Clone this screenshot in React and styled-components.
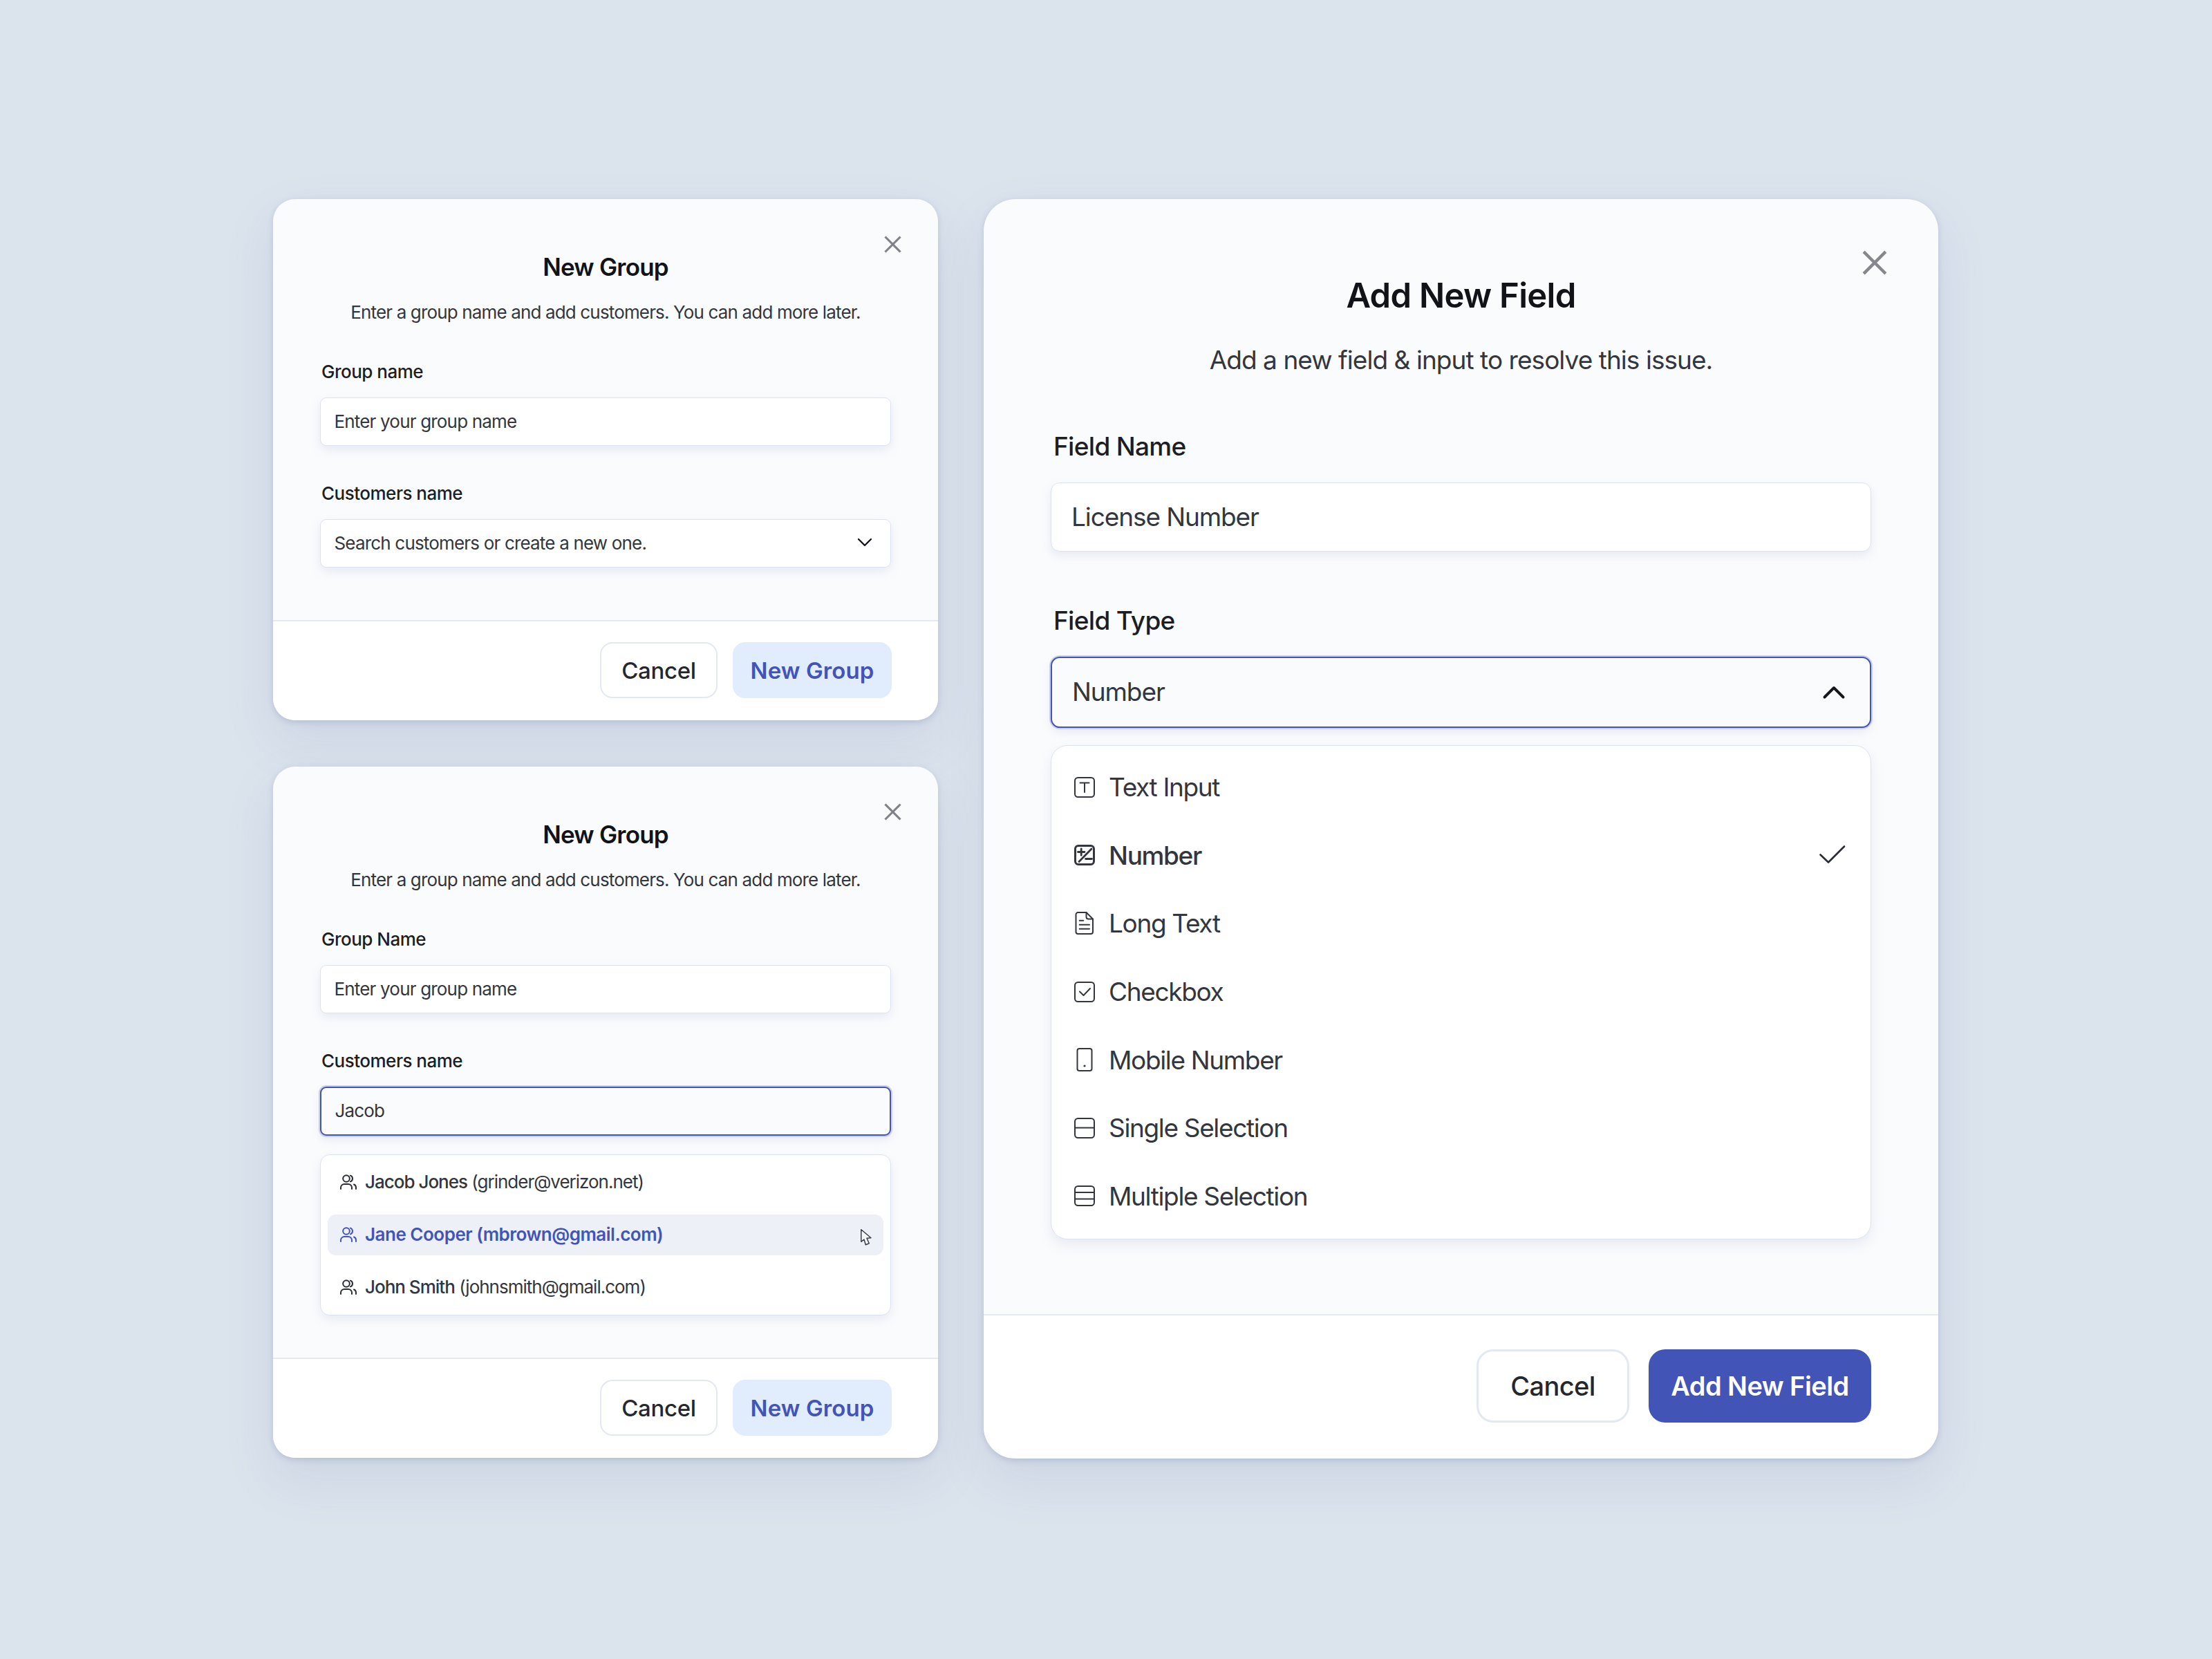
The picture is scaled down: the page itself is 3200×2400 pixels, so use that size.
import React from 'react';
import styled, { createGlobalStyle } from 'styled-components';

const GlobalStyle = createGlobalStyle`
  * { box-sizing: border-box; }
  body {
    margin: 0;
    background: #dbe3ed;
    font-family: "Inter", "Noto Sans", sans-serif;
    color: #2a2d34;
  }
`;

const CloseIcon = ({ size, color }) => (
  <svg width={size} height={size} viewBox="0 0 24 24" fill="none" stroke={color} strokeWidth="3" strokeLinecap="square">
    <path d="M2.5 2.5 21.5 21.5M21.5 2.5 2.5 21.5" />
  </svg>
);

const Chevron = ({ up, size, width }) => (
  <svg width={size} height={size} viewBox="0 0 24 24" fill="none" stroke="#15171c" strokeWidth={width} strokeLinecap="round" strokeLinejoin="round">
    <path d={up ? 'M3 17 12 8 21 17' : 'M3 7 12 16 21 7'} />
  </svg>
);

const PersonIcon = ({ color }) => (
  <svg width="24" height="22" viewBox="0 0 24 22" fill="none" stroke={color} strokeWidth="2" strokeLinecap="round">
    <circle cx="9" cy="6" r="4.8" />
    <path d="M15 1.6c2.2.8 3 2.8 3 4.4s-.8 3.6-3 4.4" />
    <path d="M1 21v-2c0-3 2.5-5 5-5h6c2.5 0 5 2 5 5v2" />
    <path d="M20 14.5c1.8.6 3 2.4 3 4.5v2" />
  </svg>
);

const CursorIcon = () => (
  <svg width="16" height="24" viewBox="0 0 16 24" fill="#f4f6fa" stroke="#3b3e46" strokeWidth="1.5" strokeLinejoin="round">
    <path d="M.8.8v17.5L5 15l2.3 7.7 5-2L9 13.3l6-.6z" />
  </svg>
);

const FieldIcon = ({ type }) => {
  const box = <rect x="1" y="1" width="28" height="28" rx="4.5" />;
  let inner = null;
  if (type === 'text') {
    inner = <>{box}<path d="M8.5 8.5h13M15 8.5V22" /></>;
  }
  if (type === 'number') {
    inner = (
      <>
        <rect x="1.5" y="1.5" width="27" height="27" rx="4.5" strokeWidth="3" />
        <path d="M7 24.5 25 6M5.5 10.5h9.5M10.2 5.8v9.5M16.5 20.5h9" strokeWidth="2.8" />
      </>
    );
  }
  if (type === 'long') {
    inner = (
      <>
        <path d="M5.5-1h12l9.5 9.5V27a3 3 0 0 1-3 3H5.5a3 3 0 0 1-3-3V2a3 3 0 0 1 3-3z" />
        <path d="M17.5-1v6.5a3 3 0 0 0 3 3H27M7.7 10.8h5.6M7.7 16.8H22M7.7 22.8H22" />
      </>
    );
  }
  if (type === 'check') {
    inner = <>{box}<path d="M8 14.5 13.5 20 23 10" /></>;
  }
  if (type === 'mobile') {
    inner = (
      <>
        <rect x="4.5" y="-1" width="21" height="32" rx="3" />
        <circle cx="15" cy="24" r="1.6" fill="currentColor" stroke="none" />
      </>
    );
  }
  if (type === 'single') {
    inner = <>{box}<path d="M1.5 14.5h27" /></>;
  }
  if (type === 'multiple') {
    inner = <>{box}<path d="M1.5 10h27M1.5 19.5h27" /></>;
  }
  return (
    <svg width="30" height="34" viewBox="0 -2 30 34" fill="none" stroke="currentColor" strokeWidth="2" strokeLinecap="round" strokeLinejoin="round">
      {inner}
    </svg>
  );
};

const fieldTypes = [
  { type: 'text', label: 'Text Input' },
  { type: 'number', label: 'Number', selected: true },
  { type: 'long', label: 'Long Text' },
  { type: 'check', label: 'Checkbox' },
  { type: 'mobile', label: 'Mobile Number' },
  { type: 'single', label: 'Single Selection' },
  { type: 'multiple', label: 'Multiple Selection' },
];

const customers = [
  { name: 'Jacob Jones', email: '(grinder@verizon.net)' },
  { name: 'Jane Cooper', email: '(mbrown@gmail.com)', active: true },
  { name: 'John Smith', email: '(johnsmith@gmail.com)' },
];

const SmallModal = ({ groupLabel, children, bodyBottom }) => (
  <Card>
    <CloseButton><CloseIcon size={25} color="#7f8288" /></CloseButton>
    <Body $bottom={bodyBottom}>
      <Title>New Group</Title>
      <Subtitle>Enter a group name and add customers. You can add more later.</Subtitle>
      <Label>{groupLabel}</Label>
      <Input>Enter your group name</Input>
      <Label>Customers name</Label>
      {children}
    </Body>
    <Footer>
      <GhostButton>Cancel</GhostButton>
      <SoftButton>New Group</SoftButton>
    </Footer>
  </Card>
);

const App = function () {
  return (
    <Page>
      <GlobalStyle />
      <LeftColumn>
        <SmallModal groupLabel="Group name" bodyBottom={76}>
          <Input>
            Search customers or create a new one.
            <Chevron size={24} width={2.4} />
          </Input>
        </SmallModal>
        <SmallModal groupLabel="Group Name" bodyBottom={61}>
          <Input $focus>Jacob</Input>
          <CustomerMenu>
            {customers.map((c) => (
              <CustomerRow key={c.name} $active={c.active}>
                <PersonIcon color={c.active ? '#4254b6' : '#2a2d34'} />
                <span>
                  <CustomerName $active={c.active}>{c.name}</CustomerName> {c.email}
                </span>
                {c.active && <CursorSpot><CursorIcon /></CursorSpot>}
              </CustomerRow>
            ))}
          </CustomerMenu>
        </SmallModal>
      </LeftColumn>

      <LargeCard>
        <CloseButton $large><CloseIcon size={36} color="#85878c" /></CloseButton>
        <LargeBody>
          <LargeTitle>Add New Field</LargeTitle>
          <LargeSubtitle>Add a new field &amp; input to resolve this issue.</LargeSubtitle>
          <LargeLabel>Field Name</LargeLabel>
          <LargeInput>License Number</LargeInput>
          <LargeLabel>Field Type</LargeLabel>
          <LargeInput $focus>
            Number
            <Chevron up size={36} width={2.6} />
          </LargeInput>
          <TypeMenu>
            {fieldTypes.map((f) => (
              <TypeRow key={f.type} $selected={f.selected}>
                <FieldIcon type={f.type} />
                <TypeName>{f.label}</TypeName>
                {f.selected && (
                  <svg width="38" height="28" viewBox="0 0 38 28" fill="none" stroke="#2a2d34" strokeWidth="2.6" strokeLinecap="round" strokeLinejoin="round">
                    <path d="M1.5 13.5 13 24.5 36 1.5" />
                  </svg>
                )}
              </TypeRow>
            ))}
          </TypeMenu>
        </LargeBody>
        <LargeFooter>
          <LargeGhost>Cancel</LargeGhost>
          <PrimaryButton>Add New Field</PrimaryButton>
        </LargeFooter>
      </LargeCard>
    </Page>
  );
};

export default App;

const Page = styled.div`
  width: 3200px;
  height: 2400px;
  padding: 288px 396px 290px 395px;
  display: flex;
  gap: 66px;
  background: #dbe3ed;
`;

const LeftColumn = styled.div`
  width: 962px;
  display: flex;
  flex-direction: column;
  gap: 67px;
`;

const Card = styled.section`
  position: relative;
  border-radius: 32px;
  background: #fafbfd;
  overflow: hidden;
  box-shadow: 0 3px 8px rgba(90, 100, 150, 0.22), 0 30px 70px rgba(110, 125, 165, 0.14);
`;

const LargeCard = styled(Card)`
  width: 1381px;
  border-radius: 46px;
`;

const CloseButton = styled.div`
  position: absolute;
  display: flex;
  top: ${(p) => (p.$large ? '74px' : '53px')};
  right: ${(p) => (p.$large ? '74px' : '53px')};
`;

const Body = styled.div`
  padding: 76px 68px ${(p) => p.$bottom}px;
`;

const LargeBody = styled.div`
  padding: 110px 97px 108px;
`;

const Title = styled.h2`
  margin: 0;
  font-size: 35px;
  line-height: 44px;
  font-weight: 600;
  letter-spacing: -0.8px;
  text-align: center;
  color: #111318;
`;

const LargeTitle = styled(Title)`
  font-size: 49px;
  line-height: 60px;
  letter-spacing: -0.7px;
`;

const Subtitle = styled.p`
  margin: 27px 0 0;
  font-size: 26px;
  line-height: 34px;
  letter-spacing: -0.85px;
  text-align: center;
  color: #33363d;
`;

const LargeSubtitle = styled(Subtitle)`
  margin-top: 38px;
  font-size: 37px;
  line-height: 50px;
  letter-spacing: -0.95px;
`;

const Label = styled.div`
  margin: 51px 0 19px;
  padding-left: 2px;
  font-size: 26px;
  line-height: 36px;
  font-weight: 500;
  letter-spacing: -0.5px;
  color: #1c1e24;
`;

const LargeLabel = styled(Label)`
  margin: 75px 0 27px;
  padding-left: 4px;
  font-size: 37px;
  line-height: 50px;
  letter-spacing: -0.7px;
`;

const Input = styled.div`
  height: ${(p) => (p.$focus ? '71px' : '70px')};
  padding: 0 25px 2px 19.5px;
  display: flex;
  align-items: center;
  justify-content: space-between;
  font-size: 26px;
  letter-spacing: -0.82px;
  color: #33363d;
  background: ${(p) => (p.$focus ? '#fafbfd' : '#fff')};
  border-radius: 9px;
  border: ${(p) => (p.$focus ? '2px solid #4254b6' : '1.5px solid #dde3ee')};
  box-shadow: ${(p) => (p.$focus ? '0 0 0 2px #ccd2e4,' : '')} 0 6px 14px rgba(120, 135, 175, 0.14);
`;

const LargeInput = styled(Input)`
  height: ${(p) => (p.$focus ? '103px' : '100px')};
  padding: 0 34px 2px 29px;
  font-size: 37px;
  letter-spacing: -1.1px;
  border-radius: 13px;
`;

const CustomerMenu = styled.div`
  margin-top: 27px;
  padding: 10px;
  display: flex;
  flex-direction: column;
  gap: 17px;
  background: #fff;
  border: 1.5px solid #dde3ee;
  border-radius: 14px;
  box-shadow: 0 6px 14px rgba(120, 135, 175, 0.14);
`;

const CustomerRow = styled.div`
  height: 59px;
  padding: 0 18px 2px;
  display: flex;
  align-items: center;
  gap: 12px;
  position: relative;
  font-size: 26px;
  letter-spacing: ${(p) => (p.$active ? '-0.5px' : '-1px')};
  border-radius: 12px;
  color: ${(p) => (p.$active ? '#4254b6' : '#33363d')};
  font-weight: ${(p) => (p.$active ? 600 : 400)};
  background: ${(p) => (p.$active ? '#edf0f7' : 'transparent')};
`;

const CustomerName = styled.span`
  font-weight: ${(p) => (p.$active ? 600 : 500)};
`;

const CursorSpot = styled.span`
  position: absolute;
  right: 17px;
  top: 21px;
  display: flex;
`;

const TypeMenu = styled.div`
  margin-top: 25px;
  padding: 10.5px 0 12.5px;
  background: #fff;
  border: 1.5px solid #dde3ee;
  border-radius: 24px;
  box-shadow: 0 8px 18px rgba(120, 135, 175, 0.14);
`;

const TypeRow = styled.div`
  height: 98.6px;
  padding: 0 36px 0 33px;
  display: flex;
  align-items: center;
  gap: 20px;
  font-size: 37px;
  letter-spacing: -1.35px;
  color: #33363d;
  font-weight: ${(p) => (p.$selected ? 500 : 400)};
`;

const TypeName = styled.span`
  flex: 1;
`;

const Footer = styled.div`
  padding: 30px 67px 32px;
  display: flex;
  justify-content: flex-end;
  gap: 22px;
  background: #fff;
  border-top: 2px solid #e5eaf2;
`;

const LargeFooter = styled(Footer)`
  padding: 49px 97px 51px;
  gap: 28px;
`;

const BaseButton = styled.button`
  height: 81px;
  display: flex;
  align-items: center;
  justify-content: center;
  font-family: inherit;
  font-size: 33px;
  font-weight: 500;
  letter-spacing: -0.3px;
  border-radius: 18px;
`;

const GhostButton = styled(BaseButton)`
  width: 170px;
  background: #fff;
  color: #25272d;
  border: 2px solid #e3e8f1;
`;

const SoftButton = styled(BaseButton)`
  width: 230px;
  border: 0;
  font-weight: 600;
  letter-spacing: 0.1px;
  background: #e1ecfd;
  color: #4254b6;
`;

const LargeGhost = styled(GhostButton)`
  width: 221px;
  height: 106px;
  font-size: 38px;
  letter-spacing: -0.6px;
  border-radius: 24px;
  border-width: 3px;
`;

const PrimaryButton = styled(BaseButton)`
  width: 322px;
  height: 106px;
  font-size: 38px;
  font-weight: 600;
  letter-spacing: -0.55px;
  border: 0;
  border-radius: 24px;
  background: #4254b6;
  color: #fff;
`;
